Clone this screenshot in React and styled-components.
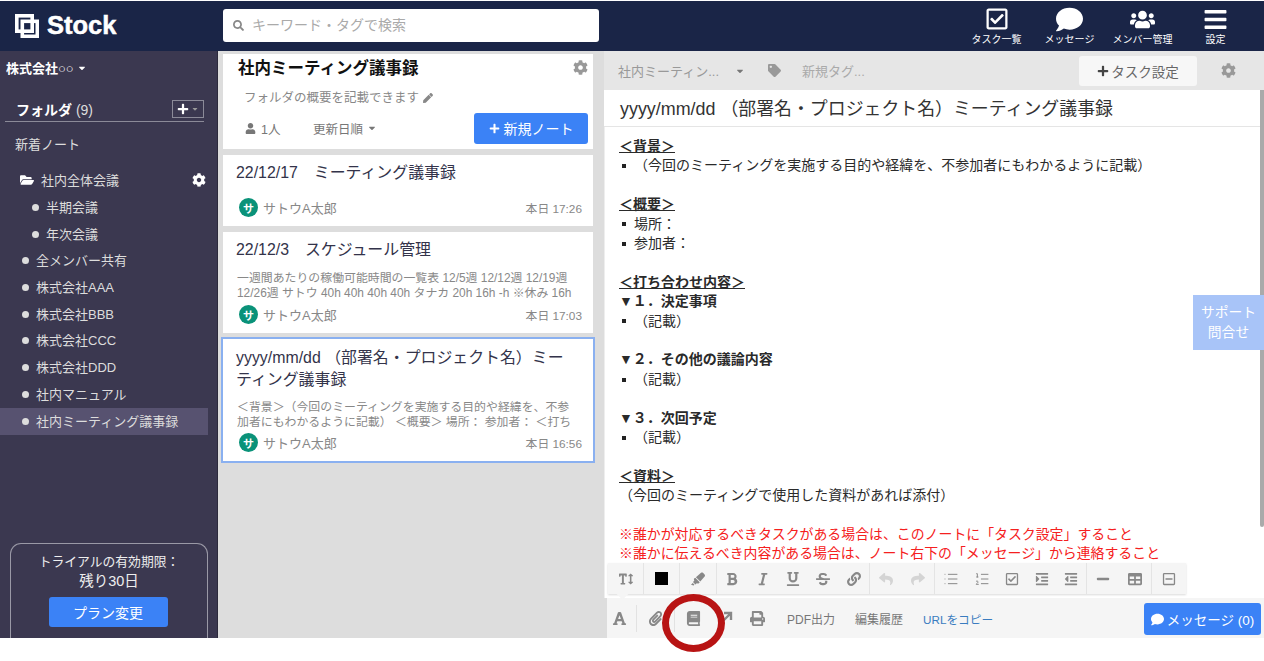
import React from "react";
import styled, { createGlobalStyle } from "styled-components";
import { List, ListOrdered } from "lucide-react";
import { FaCog, FaSearch, FaUser, FaPen, FaCaretDown, FaPlus, FaFolderOpen, FaTag, FaComment, FaUsers, FaBars, FaRegCheckSquare, FaTextHeight, FaHighlighter, FaBold, FaItalic, FaUnderline, FaStrikethrough, FaLink, FaReply, FaShare, FaIndent, FaOutdent, FaMinus, FaTable, FaRegMinusSquare, FaFont, FaPaperclip, FaBook, FaPrint } from "react-icons/fa";

const Global = createGlobalStyle`
  html, body { margin: 0; padding: 0; background: #fff; overflow: hidden; }
  body { font-family: "Liberation Sans", "Noto Sans CJK JP", sans-serif; }
  * { box-sizing: border-box; }
`;
const Page = styled.div`position: relative; width: 1264px; height: 661px; display: flex; flex-direction: column; background: #fff; padding-top: 1px;`;
const Header = styled.header`height: 50px; background: #1a2547; display: flex; align-items: center; flex: none;`;
const Logo = styled.div`width: 223px; display: flex; align-items: center; padding: 0 0 1px 15px; gap: 8px; color: #fff; font-size: 25.5px; font-weight: 700; -webkit-text-stroke: .5px #fff; flex: none;`;
const Search = styled.div`width: 376px; height: 33px; margin-bottom: 1px; background: #fff; border-radius: 3px; display: flex; align-items: center; padding: 0 0 3px 10px; gap: 8px; color: #aaa; font-size: 14px; svg{color:#888;font-size:11px;margin-top:2px;}`;
const Nav = styled.nav`margin: 0 0 2px auto; display: flex; padding-right: 12px;`;
const NavItem = styled.div`width: 73px; display: flex; flex-direction: column; align-items: center; color: #fff; font-size: 10px; line-height: 12px;`;
const NavIcon = styled.div`height: 29px; display: flex; align-items: center; justify-content: center; font-size: ${p => p.$s}px;`;
const Body = styled.div`height: 587px; display: flex; flex: none;`;
const Side = styled.aside`width: 218px; background: #3b3850; flex: none; display: flex; flex-direction: column; color: #ddd; font-size: 13px; border-right: 1px solid #2c2a3c;`;
const Company = styled.div`height: 33px; padding: 0 6px 0; color: #fff; font-weight: 700; font-size: 13px; display: flex; align-items: center; gap: 3px; svg{font-size:10px;}`;
const FolderHead = styled.div`margin: 16px 13px 0 5px; height: 22px; border-bottom: 1px solid #8b8a98; display: flex; align-items: center; justify-content: space-between; padding: 0 0 4px 11px; color: #fff; font-weight: 700; font-size: 14px; span span{font-weight:400;font-size:14px;color:#ddd;}`;
const AddBtn = styled.div`width: 32px; height: 18px; border: 1px solid #8b8a98; display: flex; align-items: center; justify-content: center; gap: 2px; font-size: 12px; color: #fff; svg+svg{font-size:8px;color:#999;}`;
const Newest = styled.div`height: 27px; margin-top: 9px; padding: 0 0 2px 15px; display: flex; align-items: center; color: #ddd;`;
const Tree = styled.div`display: flex; flex-direction: column; margin: 10px 9px 0 0;`;
const Row = styled.div`height: 26.7px; display: flex; align-items: center; gap: 7px; padding: 0 0 3px ${p => p.$indent}px; background: ${p => p.$active ? "#575270" : "transparent"}; position: relative;`;
const Dot = styled.i`width: 7px; height: 7px; border-radius: 50%; background: #ddd; flex: none; margin-top: 2px;`;
const RowGear = styled.span`position: absolute; right: 2px; top: 5px; color: #fff; font-size: 14px; line-height: 14px;`;
const Trial = styled.div`margin: auto 10px 0 10px; width: 198px; height: 95px; border: 1px solid #9a99a6; border-bottom: none; border-radius: 11px 11px 0 0; display: flex; flex-direction: column; align-items: center; color: #eee; padding-top: 8px;`;
const TrialLine = styled.div`font-size: ${p => p.$s}px; line-height: 19.5px;`;
const PlanBtn = styled.div`margin: 6px 2px 0 0; width: 119px; height: 30px; background: #3b82f6; border-radius: 3px; color: #fff; font-size: 14px; display: flex; align-items: center; justify-content: center;`;
const Mid = styled.section`width: 386px; background: #ddd; flex: none; padding: 3px 11px 0 5px; display: flex; flex-direction: column; gap: 6px;`;
const FolderCard = styled.div`height: 95px; background: #fff; padding: 0 5px 0 15px; display: flex; flex-direction: column; position: relative;`;
const FolderTitle = styled.div`font-size: 16.5px; font-weight: 700; color: #111; line-height: 20px; margin-top: 4px;`;
const FolderDesc = styled.div`font-size: 12.5px; color: #888; margin: 12px 0 0 6px; display: flex; align-items: center; gap: 4px; line-height: 16px; svg{font-size:10px;}`;
const FolderFoot = styled.div`display: flex; align-items: center; font-size: 12.5px; color: #777; margin-top: 6px; height: 32px; padding-left: 7px;`;
const Members = styled.div`display: flex; align-items: center; gap: 5px; width: 68px; svg{font-size:11px;}`;
const Sort = styled.div`display: flex; align-items: center; gap: 4px; svg{font-size:10px;}`;
const NewBtn = styled.div`margin-left: auto; width: 114px; height: 31px; border-radius: 3px; background: #3b82f6; color: #fff; font-size: 14px; display: flex; align-items: center; justify-content: center; gap: 4px; svg{font-size:11px;}`;
const CardGear = styled.span`position: absolute; right: 5px; top: 6px; color: #999; font-size: 15px;`;
const Note = styled.article`height: ${p => p.$h}px; background: #fff; margin: ${p => p.$sel ? "-2px -2px 0" : "0"}; border: ${p => p.$sel ? "2px solid #8ab0f0" : "none"}; padding: ${p => p.$sel ? "8px 11px 0 13px" : "7px 11px 0 13px"}; display: flex; flex-direction: column;`;
const NoteTitle = styled.div`font-size: 15.9px; line-height: 22px; color: #33334a;`;
const NoteText = styled.div`font-size: 11.9px; line-height: 15px; color: #888; margin: ${p => p.$mt}px 0 0 1px; white-space: nowrap;`;
const NoteFoot = styled.div`margin-top: auto; padding: 0 0 9px 3px; display: flex; align-items: center; color: #888; font-size: 13px;`;
const Avatar = styled.span`width: 19px; height: 19px; border-radius: 50%; background: #0a9279; color: #fff; font-size: 11px; font-weight: 700; display: flex; align-items: center; justify-content: center; margin-right: 5px;`;
const When = styled.span`margin-left: auto; font-size: 11.8px;`;
const Main = styled.main`flex: 1; display: flex; flex-direction: column; position: relative; min-width: 0;`;
const TopBar = styled.div`height: 39px; background: #e6e6e6; display: flex; align-items: center; padding: 0 28px 0 14px; color: #999; font-size: 13px; flex: none;`;
const Crumb = styled.div`width: 127px; display: flex; justify-content: space-between; align-items: center; svg{font-size:10px;color:#777;}`;
const TagArea = styled.div`margin-left: 23px; display: flex; align-items: center; gap: 21px; color: #aaa; svg{color:#999;font-size:13px;}`;
const TaskBtn = styled.div`margin-left: auto; width: 118px; height: 30px; background: #f7f7f7; border-radius: 3px; color: #666; font-size: 13.5px; display: flex; align-items: center; justify-content: center; gap: 2px; svg{color:#444;font-size:12px;}`;
const TopGear = styled.span`margin-left: 24px; color: #999; font-size: 15px; display:flex;`;
const DocTitle = styled.div`height: 37px; border-bottom: 1px solid #e5e5e5; padding: 0 16px 3px; font-size: 17.9px; color: #333; display: flex; align-items: center; flex: none;`;
const Content = styled.div`flex: 1; padding: 10px 16px 0 14px; font-size: 14px; line-height: 19.4px; color: #2a2a2a; overflow: hidden; border-left: 1px solid #eee;`;
const H = styled.div`font-weight: 700; text-decoration: underline; font-size: 14px; margin-top: ${p => p.$gap ? "19.4px" : "0"};`;
const Li = styled.div`display: flex; gap: 8px; align-items: center; &::before{content:""; width:4px; height:4px; background:#222; flex:none; margin-left:3px;}`;
const Sub = styled.div`font-weight: 700; margin-top: ${p => p.$gap ? "19.4px" : "0"};`;
const Red = styled.div`color: #f52020; font-size: 13.9px;`;
const Para = styled.div`margin-top: ${p => p.$gap ? "19.4px" : "0"};`;
const Scroll = styled.div`position: absolute; right: 0; top: 39px; width: 4px; height: 437px; background: #aaa; border-radius: 0 0 2px 2px;`;
const Support = styled.div`position: absolute; right: 0; top: 244px; width: 71px; height: 55px; background: #a8c4f8; color: #fff; font-size: 13.8px; line-height: 20px; display: flex; flex-direction: column; align-items: center; justify-content: center;`;
const Toolbar = styled.div`position: absolute; left: 4px; top: 512px; height: 31px; background: #f5f5f5; box-shadow: 0 1px 2px rgba(0,0,0,.15); display: flex; align-items: center; color: #888; font-size: 14px; z-index: 2;
  &::after{content:""; position:absolute; left:10px; bottom:-4px; width:9px; height:9px; background:#f5f5f5; transform:rotate(45deg);}`;
const Group = styled.div`height: 100%; display: flex; align-items: center; justify-content: space-around; width: ${p => p.$w}px; border-right: ${p => p.$last ? "none" : "1px solid #e4e4e4"}; color: ${p => p.$off ? "#d4d4d4" : "#888"};`;
const Swatch = styled.i`width: 13px; height: 13px; background: #000;`;
const Bottom = styled.div`height: 40px; background: #f5f5f5; display: flex; align-items: center; flex: none; padding-left: 5px; color: #777; font-size: 12px; border-left: 3px solid #ddd; position: relative; z-index: 1;`;
const BIcon = styled.span`width: ${p => p.$w}px; display: flex; align-items: center; font-size: 15px; color: #888; height: 27px; border-right: ${p => p.$sep ? "1px solid #e2e2e2" : "none"};`;
const BLink = styled.span`margin-right: 20px; color: ${p => p.$blue ? "#3a7cc0" : "#777"}; font-size: ${p => p.$blue ? "11.7px" : "12px"};`;
const MsgBtn = styled.div`position: absolute; right: 3px; top: 5px; width: 117px; height: 32px; background: #3b82f6; border-radius: 3px; color: #fff; font-size: 13.5px; display: flex; align-items: center; justify-content: center; gap: 3px; svg{font-size:13px;}`;
const Ring = styled.div`position: absolute; left: 662px; top: 594px; width: 63px; height: 58px; border: 7px solid #b81414; border-radius: 50%; z-index: 3;`;

const Sato = ({ time }) => (
  <NoteFoot><Avatar>サ</Avatar>サトウA太郎<When>本日 {time}</When></NoteFoot>
);

export default function App() {
  return (
    <Page>
      <Global />
      <Header>
        <Logo>
          <svg width="24" height="24" viewBox="0 0 24 24" fill="none" stroke="#fff" strokeWidth="3.6"><rect x="1.8" y="1.8" width="15.4" height="15.4" /><rect x="7.3" y="7.3" width="15" height="15" /></svg>
          Stock
        </Logo>
        <Search><FaSearch />キーワード・タグで検索</Search>
        <Nav>
          <NavItem><NavIcon $s={24}><FaRegCheckSquare /></NavIcon>タスク一覧</NavItem>
          <NavItem><NavIcon $s={27}><FaComment /></NavIcon>メッセージ</NavItem>
          <NavItem><NavIcon $s={25}><FaUsers /></NavIcon>メンバー管理</NavItem>
          <NavItem><NavIcon $s={25}><FaBars /></NavIcon>設定</NavItem>
        </Nav>
      </Header>
      <Body>
        <Side>
          <Company>株式会社○○ <FaCaretDown /></Company>
          <FolderHead><span>フォルダ <span>(9)</span></span><AddBtn><FaPlus /><FaCaretDown /></AddBtn></FolderHead>
          <Newest>新着ノート</Newest>
          <Tree>
            <Row $indent={20}><FaFolderOpen style={{ color: "#fff", fontSize: 14 }} />社内全体会議<RowGear><FaCog /></RowGear></Row>
            {["半期会議", "年次会議"].map(t => <Row key={t} $indent={32}><Dot />{t}</Row>)}
            {["全メンバー共有", "株式会社AAA", "株式会社BBB", "株式会社CCC", "株式会社DDD", "社内マニュアル"].map(t => <Row key={t} $indent={22}><Dot />{t}</Row>)}
            <Row $indent={22} $active><Dot />社内ミーティング議事録</Row>
          </Tree>
          <Trial>
            <TrialLine $s={12.8}>トライアルの有効期限：</TrialLine>
            <TrialLine $s={14.5}>残り30日</TrialLine>
            <PlanBtn>プラン変更</PlanBtn>
          </Trial>
        </Side>
        <Mid>
          <FolderCard>
            <FolderTitle>社内ミーティング議事録</FolderTitle>
            <CardGear><FaCog /></CardGear>
            <FolderDesc>フォルダの概要を記載できます <FaPen /></FolderDesc>
            <FolderFoot>
              <Members><FaUser />1人</Members>
              <Sort>更新日順 <FaCaretDown /></Sort>
              <NewBtn><FaPlus />新規ノート</NewBtn>
            </FolderFoot>
          </FolderCard>
          <Note $h={71}>
            <NoteTitle>22/12/17　ミーティング議事録</NoteTitle>
            <Sato time="17:26" />
          </Note>
          <Note $h={101}>
            <NoteTitle>22/12/3　スケジュール管理</NoteTitle>
            <NoteText $mt={10}>一週間あたりの稼働可能時間の一覧表 12/5週 12/12週 12/19週<br />12/26週 サトウ 40h 40h 40h 40h タナカ 20h 16h -h ※休み 16h</NoteText>
            <Sato time="17:03" />
          </Note>
          <Note $h={126} $sel>
            <NoteTitle>yyyy/mm/dd （部署名・プロジェクト名）ミー<br />ティング議事録</NoteTitle>
            <NoteText $mt={9}>＜背景＞（今回のミーティングを実施する目的や経緯を、不参<br />加者にもわかるように記載） ＜概要＞ 場所： 参加者： ＜打ち</NoteText>
            <Sato time="16:56" />
          </Note>
        </Mid>
        <Main>
          <TopBar>
            <Crumb>社内ミーティン... <FaCaretDown /></Crumb>
            <TagArea><FaTag />新規タグ...</TagArea>
            <TaskBtn><FaPlus />タスク設定</TaskBtn>
            <TopGear><FaCog /></TopGear>
          </TopBar>
          <DocTitle>yyyy/mm/dd （部署名・プロジェクト名）ミーティング議事録</DocTitle>
          <Content>
            <H>＜背景＞</H>
            <Li>（今回のミーティングを実施する目的や経緯を、不参加者にもわかるように記載）</Li>
            <H $gap>＜概要＞</H>
            <Li>場所：</Li>
            <Li>参加者：</Li>
            <H $gap>＜打ち合わせ内容＞</H>
            <Sub>▼１．決定事項</Sub>
            <Li>（記載）</Li>
            <Sub $gap>▼２．その他の議論内容</Sub>
            <Li>（記載）</Li>
            <Sub $gap>▼３．次回予定</Sub>
            <Li>（記載）</Li>
            <H $gap>＜資料＞</H>
            <Para>（今回のミーティングで使用した資料があれば添付）</Para>
            <Para $gap><Red>※誰かが対応するべきタスクがある場合は、このノートに「タスク設定」すること</Red></Para>
            <Red>※誰かに伝えるべき内容がある場合は、ノート右下の「メッセージ」から連絡すること</Red>
          </Content>
          <Scroll />
          <Support><span>サポート</span><span>問合せ</span></Support>
          <Toolbar>
            <Group $w={36}><FaTextHeight /></Group>
            <Group $w={36}><Swatch /></Group>
            <Group $w={37}><FaHighlighter /></Group>
            <Group $w={153}><FaBold /><FaItalic /><FaUnderline /><FaStrikethrough /><FaLink /></Group>
            <Group $w={65} $off><FaReply /><FaShare /></Group>
            <Group $w={152}><List size={16} strokeWidth={1.5} /><ListOrdered size={16} strokeWidth={1.5} /><FaRegCheckSquare /><FaIndent /><FaOutdent /></Group>
            <Group $w={65}><FaMinus /><FaTable /></Group>
            <Group $w={34} $last><FaRegMinusSquare /></Group>
          </Toolbar>
          <Bottom>
            <BIcon $w={25} $sep><FaFont /></BIcon>
            <BIcon $w={11} />
            <BIcon $w={27} $sep><FaPaperclip /></BIcon>
            <BIcon $w={11} />
            <BIcon $w={32}><FaBook /></BIcon>
            <BIcon $w={32}>
              <svg width="15" height="15" viewBox="0 0 15 15" fill="none" stroke="#888" strokeWidth="2.4"><path d="M2 13 12 3M6 2h7v7" /></svg>
            </BIcon>
            <BIcon $w={37}><FaPrint /></BIcon>
            <BLink>PDF出力</BLink>
            <BLink>編集履歴</BLink>
            <BLink $blue>URLをコピー</BLink>
            <MsgBtn><FaComment />メッセージ (0)</MsgBtn>
          </Bottom>
        </Main>
      </Body>
      <Ring />
    </Page>
  );
}
